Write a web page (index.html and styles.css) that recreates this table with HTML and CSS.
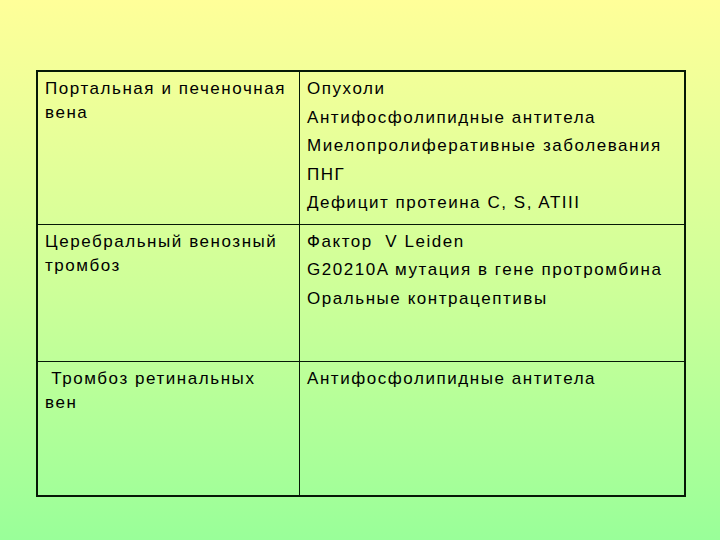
FILE: index.html
```html
<!DOCTYPE html>
<html lang="ru">
<head>
<meta charset="utf-8">
<link rel="stylesheet" href="styles.css">
</head>
<body>
<table class="grid">
  <tr class="r1">
    <td class="left">Портальная и печеночная вена</td>
    <td class="right">
      <div class="item">Опухоли</div>
      <div class="item">Антифосфолипидные антитела</div>
      <div class="item">Миелопролиферативные заболевания</div>
      <div class="item">ПНГ</div>
      <div class="item">Дефицит протеина С, S, ATIII</div>
    </td>
  </tr>
  <tr class="r2">
    <td class="left">Церебральный венозный тромбоз</td>
    <td class="right">
      <div class="item">Фактор&nbsp; V Leiden</div>
      <div class="item">G20210A мутация в гене протромбина</div>
      <div class="item">Оральные контрацептивы</div>
    </td>
  </tr>
  <tr class="r3">
    <td class="left">&nbsp;Тромбоз ретинальных вен</td>
    <td class="right">
      <div class="item">Антифосфолипидные антитела</div>
    </td>
  </tr>
</table>
</body>
</html>
```
FILE: styles.css
```css
html, body {
  margin: 0;
  padding: 0;
}
body {
  width: 720px;
  height: 540px;
  background: linear-gradient(to bottom, #ffff99 0%, #ccff99 55%, #99ff99 100%);
  font-family: "Liberation Sans", Arial, sans-serif;
  font-size: 17px;
  letter-spacing: 1.55px;
  color: #000;
  padding-top: 70px;
  box-sizing: border-box;
}
.grid {
  margin-left: 36px;
  width: 650px;
  border-collapse: collapse;
  border: 2px solid #061806;
}
.grid td {
  border: 1px solid #061806;
  vertical-align: top;
  padding: 5px 6px 0 7px;
  line-height: 24px;
}
.left {
  width: 248px;
}
.item {
  margin-bottom: 4.6px;
}
.r1 { height: 153px; }
.r2 { height: 137px; }
.r3 { height: 135px; }
```
